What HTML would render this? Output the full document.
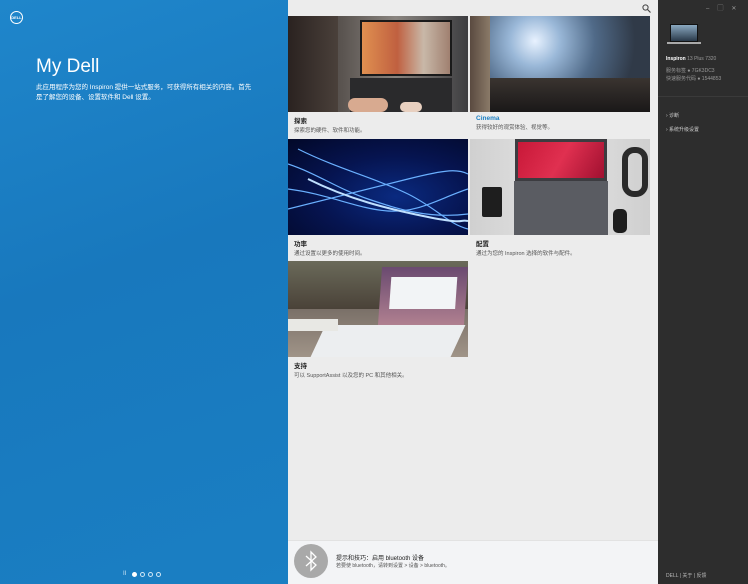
<!DOCTYPE html>
<html><head><meta charset="utf-8"><style>
*{margin:0;padding:0;box-sizing:border-box}
body{width:748px;height:584px;overflow:hidden;font-family:"Liberation Sans","Noto Sans CJK SC",sans-serif;position:relative;background:#ececec}
#left{position:absolute;left:0;top:0;width:288px;height:584px;background:linear-gradient(160deg,#1f86cb 0%,#1878bd 45%,#1a7fc3 100%)}
.logo{position:absolute;left:10px;top:11px;width:13px;height:13px;border:1.2px solid #fff;border-radius:50%;color:#fff;font-size:4px;line-height:11px;text-align:center;font-weight:bold}
h1{position:absolute;left:36px;top:56px;color:#fff;font-weight:normal;font-size:19px}
.desc{position:absolute;left:36px;top:83px;width:218px;color:#fff;font-size:6.5px;line-height:10px}
.dots{position:absolute;left:123px;top:571px;display:flex;gap:3px;align-items:center}
.dots i{width:5px;height:5px;border:1px solid #cfe6f5;border-radius:50%}
.dots i.on{background:#fff;border-color:#fff}
#mid{position:absolute;left:288px;top:0;width:370px;height:584px;background:#ececec}
.tile{position:absolute;width:180px}
.img{width:180px;height:96px;position:relative;overflow:hidden}
.t{font-size:6.5px;color:#222;font-weight:bold;margin:3px 0 0 6px}
.s{font-size:5.5px;color:#555;margin:1px 0 0 6px}
#bot{position:absolute;left:0;top:540px;width:370px;height:44px;background:#f3f4f6;border-top:1px solid #e2e2e2}
.bt{position:absolute;left:6px;top:3px;width:34px;height:34px;border-radius:50%;background:#a9a9a9}
#right{position:absolute;left:658px;top:0;width:90px;height:584px;background:#2d2d2d;color:#ccc;font-size:5px}
</style></head><body>
<div id="left">
<div class="logo">DELL</div>
<h1>My Dell</h1>
<div class="desc">此应用程序为您的 Inspiron 提供一站式服务，可获得所有相关的内容。首先是了解您的设备、设置软件和 Dell 设置。</div>
<div class="dots"><span style="color:#cfe6f5;font-size:6px;margin-right:3px">II</span><i class="on"></i><i></i><i></i><i></i></div>
</div>
<div id="mid">
<svg style="position:absolute;left:354px;top:4px" width="9" height="9" viewBox="0 0 9 9"><circle cx="3.5" cy="3.5" r="2.6" fill="none" stroke="#444" stroke-width="1"/><line x1="5.5" y1="5.5" x2="8.5" y2="8.5" stroke="#444" stroke-width="1.2"/></svg>
<div class="tile" style="left:0;top:16px">
<div class="img" style="background:linear-gradient(90deg,#3a3230 0%,#5a5450 30%,#8a8580 60%,#3d3d40 100%)">
<div style="position:absolute;left:72px;top:4px;width:92px;height:56px;background:#1a1a1a;padding:2px"><div style="width:100%;height:100%;background:linear-gradient(90deg,#e09050,#c06040 40%,#c8b8a8 70%,#a08070)"></div></div>
<div style="position:absolute;left:62px;top:62px;width:102px;height:34px;background:#2a2a2c"></div>
<div style="position:absolute;left:0;top:0;width:50px;height:96px;background:linear-gradient(90deg,#2a2220,#4a403a)"></div>
<div style="position:absolute;left:60px;top:82px;width:40px;height:14px;background:#d8aa90;border-radius:7px"></div>
<div style="position:absolute;left:112px;top:86px;width:22px;height:10px;background:#e8d0c0;border-radius:5px"></div>
</div>
<div class="t">探索</div><div class="s">探索您的硬件、软件和功能。</div></div>
<div class="tile" style="left:182px;top:16px">
<div class="img" style="background:radial-gradient(circle at 65px 25px,#e8f2ff 0,#9ab8d8 25px,#506a88 60px,#303a48 100px)">
<div style="position:absolute;left:0;top:62px;width:180px;height:34px;background:linear-gradient(#3a3430,#1a1818)"></div>
<div style="position:absolute;left:0;top:0;width:20px;height:96px;background:linear-gradient(90deg,#5a4a40,#8a7a68)"></div>
</div>
<div class="t" style="color:#1a7fc3">Cinema</div><div class="s">获得较好的观赏体验、视觉等。</div></div>
<div class="tile" style="left:0;top:139px">
<div class="img" style="background:radial-gradient(ellipse at 60% 60%,#0a2a80 0,#061450 50%,#020828 100%)">
<svg width="180" height="96" style="position:absolute;left:0;top:0"><g fill="none" stroke="#6ab0ff" stroke-width="1.2"><path d="M0 25 C30 35 50 50 80 60 S140 80 180 75"/><path d="M0 50 C40 55 70 70 100 72 S150 60 180 50"/><path d="M10 10 C50 30 90 40 120 55 S160 85 180 90"/><path d="M0 70 C40 60 80 50 120 40 S170 30 180 35"/></g><path d="M20 40 C60 60 100 70 140 78 S170 80 180 82" stroke="#bfe0ff" stroke-width="2" fill="none"/></svg>
</div>
<div class="t">功率</div><div class="s">通过设置以更多的使用时间。</div></div>
<div class="tile" style="left:182px;top:139px">
<div class="img" style="background:linear-gradient(90deg,#d0d0d0,#e4e4e4 50%,#cfcfcf)">
<div style="position:absolute;left:45px;top:0;width:92px;height:42px;background:#3c3c40;padding:3px"><div style="width:100%;height:100%;background:linear-gradient(120deg,#c81838,#e03050 50%,#a01030)"></div></div>
<div style="position:absolute;left:44px;top:42px;width:94px;height:54px;background:#5a5c62"></div>
<div style="position:absolute;left:12px;top:48px;width:20px;height:30px;background:#1e1e1e;border-radius:2px"></div>
<div style="position:absolute;left:143px;top:70px;width:14px;height:24px;background:#1e1e1e;border-radius:5px"></div>
<div style="position:absolute;left:152px;top:8px;width:26px;height:50px;border:6px solid #2a2a2a;border-radius:12px"></div>
</div>
<div class="t">配置</div><div class="s">通过为您的 Inspiron 选择的软件与配件。</div></div>
<div class="tile" style="left:0;top:261px">
<div class="img" style="background:linear-gradient(180deg,#6a6a5a 0%,#4a4238 50%,#5a5048 100%)">
<div style="position:absolute;left:0;top:48px;width:180px;height:48px;background:linear-gradient(#7a7068,#a09488)"></div>
<div style="position:absolute;left:92px;top:6px;width:86px;height:58px;background:linear-gradient(#6a4a70,#b08090);transform:skewX(-4deg)"><div style="margin:10px 10px;height:32px;background:#f2f4f6"></div></div>
<div style="position:absolute;left:30px;top:64px;width:140px;height:32px;background:#eceef0;transform:skewX(-25deg)"></div>
<div style="position:absolute;left:0;top:58px;width:50px;height:12px;background:#e8e8e4"></div>
</div>
<div class="t">支持</div><div class="s">可以 SupportAssist 以及您的 PC 和其他相关。</div></div>
<div id="bot"><div class="bt"><svg width="34" height="34" viewBox="0 0 34 34"><path d="M12 12 L22 21 L17 26 L17 8 L22 13 L12 22" fill="none" stroke="#fff" stroke-width="1.3"/></svg></div>
<div style="position:absolute;left:48px;top:12px;font-size:6px;color:#222">提示和技巧：启用 bluetooth 设备</div>
<div style="position:absolute;left:48px;top:21px;font-size:5px;color:#555">若要使 bluetooth，请转到设置 &gt; 设备 &gt; bluetooth。</div></div>
</div>
<div id="right">
<div style="position:absolute;left:48px;top:3px;color:#999;font-size:6px;letter-spacing:8px">–▢✕</div>
<div style="position:absolute;left:12px;top:24px;width:28px;height:18px;background:linear-gradient(#8aa8c0,#2a3a4a);border:1.5px solid #111"></div>
<div style="position:absolute;left:9px;top:42px;width:34px;height:2px;background:#aaa"></div>
<div style="position:absolute;left:8px;top:56px;color:#fff"><b>Inspiron</b> <span style="color:#999">13 Plus 7320</span></div>
<div style="position:absolute;left:8px;top:67px;color:#999">服务标签 ● 7GK3DC3</div>
<div style="position:absolute;left:8px;top:75px;color:#999">快速服务代码 ● 1544853</div>
<div style="position:absolute;left:0;top:96px;width:90px;height:1px;background:#3a3a3a"></div>
<div style="position:absolute;left:8px;top:112px">› 诊断</div>
<div style="position:absolute;left:8px;top:126px">› 系统升级设置</div>
<div style="position:absolute;left:8px;top:572px;color:#bbb">DELL | 关于 | 反馈</div>
</div>
</body></html>
